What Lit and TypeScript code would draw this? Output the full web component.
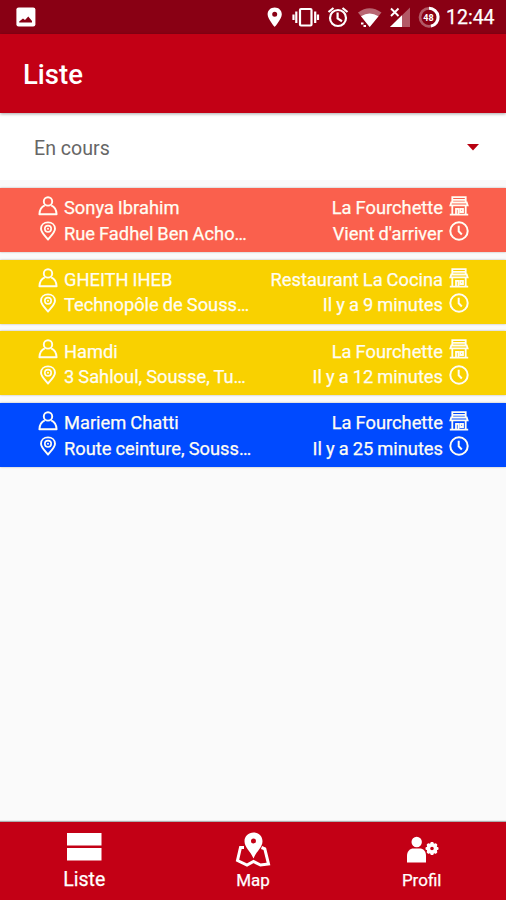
import { LitElement, html, svg, css } from "lit";
import { customElement, property } from "lit/decorators.js";

const person = html`<svg width="20" height="20" viewBox="0 0 20 20" fill="none" stroke="currentColor" stroke-width="1.900"><circle cx="10" cy="5.400" r="4.200"/><path d="M6.800 9.300C3.600 10.600 1.600 13.500 1.400 18.200H18.600C18.400 13.500 16.400 10.600 13.200 9.300" stroke-linejoin="round"/></svg>`;
const pin = html`<svg width="20" height="20" viewBox="0 0 20 20" fill="none" stroke="currentColor" stroke-width="1.900"><path d="M10 18.600C7.500 15.500 3 11.400 3 7.800C3 3.900 6.100 1.400 10 1.400S17 3.900 17 7.800C17 11.400 12.500 15.500 10 18.600Z" stroke-linejoin="round"/><circle cx="10" cy="7.800" r="3.200" stroke-width="1.600"/><circle cx="10" cy="7.800" r="1" fill="currentColor" stroke="none"/></svg>`;
const shop = html`<svg width="20" height="20" viewBox="0 0 20 20" fill="none" stroke="currentColor" stroke-width="1.800"><path d="M3.300 6V1.200H16.700V6M3 3.900H17M2.300 6.500H17.700L18.600 9.300H1.400ZM3.300 9.500V18.500M16.700 9.500V18.500M.8 18.700H19.200M7 18.500V12.800H9.500V18.500M11.500 12.800H14V16H11.500Z"/></svg>`;
const clock = html`<svg width="20" height="20" viewBox="0 0 20 20" fill="none" stroke="currentColor" stroke-width="2"><circle cx="10" cy="10" r="8.700"/><path d="M9.700 4.800V10.300L12.800 13.500"/></svg>`;

const listIcon = html`<svg width="36" height="30" viewBox="0 0 36 30" fill="currentColor"><rect x="1" y="1" width="34.500" height="12.500"/><rect x="1" y="16" width="34.500" height="12.500"/></svg>`;
const mapIcon = html`<svg width="36" height="36" viewBox="0 0 36 36"><path d="M9 15.500H5.500L2.500 28.500L12 33L18.500 29.500L25.500 33L33.500 32L29.800 16.800L26.500 15.500" fill="none" stroke="currentColor" stroke-width="3"/><path fill="currentColor" fill-rule="evenodd" d="M18.500 .5C13.500 .5 9.500 4 9.500 9.200C9.500 15.500 15.500 19 18.500 26.500C21.500 19 27.500 15.500 27.500 9.200C27.500 4 23.500 .5 18.500 .5ZM18.500 6.500A2.500 2.500 0 1 1 18.500 11.500A2.500 2.500 0 1 1 18.500 6.500Z"/></svg>`;
const profileIcon = html`<svg width="34" height="28" viewBox="0 0 34 28" fill="currentColor"><circle cx="11.700" cy="6" r="5.200"/><path d="M2 26.500V20C2 15 5 12.500 8.500 12.500H14.500C18.500 12.500 21 15 21 20V26.500Z"/><circle cx="27" cy="12.500" r="3.600" fill="none" stroke="currentColor" stroke-width="3.600"/>${[0, 45, 90, 135, 180, 225, 270, 315].map((a) => svg`<rect x="25.400" y="6" width="3.200" height="3" rx="1" transform="rotate(${a} 27 12.500)"/>`)}</svg>`;

interface Order {
  tone: string;
  name: string;
  address: string;
  place: string;
  time: string;
}

const orders: Order[] = [
  { tone: "coral", name: "Sonya Ibrahim", address: "Rue Fadhel Ben Acho…", place: "La Fourchette", time: "Vient d'arriver" },
  { tone: "yellow", name: "GHEITH IHEB", address: "Technopôle de Souss…", place: "Restaurant La Cocina", time: "Il y a 9 minutes" },
  { tone: "yellow", name: "Hamdi", address: "3 Sahloul, Sousse, Tu…", place: "La Fourchette", time: "Il y a 12 minutes" },
  { tone: "blue", name: "Mariem Chatti", address: "Route ceinture, Souss…", place: "La Fourchette", time: "Il y a 25 minutes" },
];

@customElement("status-bar")
export class StatusBar extends LitElement {
  static styles = css`
    :host { display: flex; height: 34px; flex: none; align-items: center; background: #890014; color: #fff; padding: 0 10px 0 16px; box-sizing: border-box; }
    svg { display: block; flex: none; }
    .spacer { flex: 1; }
    .icons { display: flex; align-items: center; }
    .time { font-size: 19.500px; line-height: 24px; width: 50px; margin-left: -3px; padding-top: 2px; white-space: nowrap; -webkit-text-stroke: .25px; }
    .level { font: 700 9px Roboto, sans-serif; }
  `;
  render() {
    return html`
      <svg width="20" height="20" viewBox="0 0 20 20"><rect x=".4" y=".4" width="19" height="19" rx="2.200" fill="#fff"/><path d="M3.200 15.500V14.500L7 11.500L9 13L12.300 9.500L16 14V15.500Z" fill="#890014"/></svg>
      <div class="spacer"></div>
      <div class="icons">
        <svg width="184" height="26" viewBox="0 0 184 26">
          <path fill="#fff" fill-rule="evenodd" d="M9.700 3.500C5.600 3.500 2.600 6.400 2.600 10.300C2.600 15 9.700 23 9.700 23S16.800 15 16.800 10.300C16.800 6.400 13.800 3.500 9.700 3.500ZM9.700 7.800A2.500 2.500 0 1 1 9.700 12.800A2.500 2.500 0 1 1 9.700 7.800Z"/>
          <g fill="none" stroke="#fff" stroke-width="2.200"><rect x="35" y="5" width="11.500" height="16.500" rx="1"/><path d="M31.300 7.500V19M28.500 10.500V16M50.200 7.500V19M53 10.500V16"/></g>
          <g fill="none" stroke="#fff" stroke-width="2.200"><circle cx="73" cy="14" r="8"/><path d="M72.600 8.500V14.500L77 17.200M63.500 8L68.500 4M82.500 8L77.500 4"/></g>
          <path d="M93 8.500Q104.500 0 116.500 8.500L104.700 23Z" fill="#fff" opacity=".4"/>
          <path d="M96 12.300Q104.500 6.500 113.500 12.300L104.700 23Z" fill="#fff"/><path d="M96 19.500H98.500M98.500 22H101" stroke="#fff" stroke-width="2"/>
          <path d="M145 3.500V23H125Z" fill="#fff" opacity=".35"/><path d="M137 11.300V23H125Z" fill="#fff"/><path d="M126 4.500L133.500 12M133.500 4.500L126 12" stroke="#fff" stroke-width="1.900"/>
          <circle cx="164" cy="13.300" r="9" fill="none" stroke="#fff" stroke-width="2.700" opacity=".35"/><path d="M164 4.300A9 9 0 0 1 166 22.100" fill="none" stroke="#fff" stroke-width="3"/>
          <text class="level" x="163.500" y="16.500" text-anchor="middle" fill="#fff">48</text>
        </svg>
      </div>
      <div class="time">12:44</div>`;
  }
}

@customElement("order-card")
export class OrderCard extends LitElement {
  @property({ attribute: false }) order!: Order;
  static styles = css`
    :host { display: block; }
    .card { height: 64px; box-sizing: border-box; display: flex; justify-content: space-between; padding: 7px 37px 0 38px; color: #fffdf3; font-size: 18.300px; line-height: 25.400px; word-spacing: -.5px; -webkit-text-stroke: .25px; box-shadow: 0 0 2px rgba(0,0,0,.28); }
    .coral { background: #fa604d; }
    .yellow { background: #f9d100; }
    .blue { background: #004aff; }
    .line { display: flex; gap: 6px; height: 25.400px; white-space: pre; }
    .right .line { justify-content: flex-end; }
    svg { display: block; flex: none; margin-top: 1px; -webkit-text-stroke: 0; }
    .text { padding-top: .3px; }
  `;
  render() {
    const o = this.order;
    return html`<div class="card ${o.tone}">
      <div><div class="line">${person}<span class="text">${o.name}</span></div><div class="line">${pin}<span class="text">${o.address}</span></div></div>
      <div class="right"><div class="line"><span class="text">${o.place}</span>${shop}</div><div class="line"><span class="text">${o.time}</span>${clock}</div></div>
    </div>`;
  }
}

@customElement("app-root")
export class AppRoot extends LitElement {
  static styles = css`
    :host { display: flex; flex-direction: column; height: 900px; background: #fafafa; font-family: Roboto, sans-serif; overflow: hidden; }
    svg { display: block; }
    header { height: 79px; flex: none; box-sizing: border-box; background: #c30015; color: #fff; padding: 25px 24px 0 23px; font-size: 27.500px; line-height: 32px; font-weight: 500; box-shadow: 0 1px 3px rgba(0,0,0,.35); z-index: 1; }
    .select { height: 67px; flex: none; box-sizing: border-box; background: #fff; display: flex; align-items: center; justify-content: space-between; padding: 3px 27px 0 34px; color: #666; font-size: 19.600px; }
    .select svg { margin-top: -2px; }
    .list { flex: 1; display: flex; flex-direction: column; gap: 7.700px; padding-top: 8px; }
    nav { height: 78px; flex: none; display: grid; grid-template-columns: repeat(3, 1fr); background: #c30015; color: #fff; box-shadow: 0 -1px 1px rgba(0,0,0,.3); }
    .tab { display: flex; flex-direction: column; align-items: center; font-size: 17px; line-height: 20px; -webkit-text-stroke: .25px; }
    .icon { height: 48px; box-sizing: border-box; display: flex; align-items: flex-start; padding-top: 10px; }
    .profile { padding-top: 14px; }
    .active { font-size: 19.500px; }
  `;
  render() {
    return html`
      <status-bar></status-bar>
      <header>Liste</header>
      <div class="select"><span>En cours</span><svg width="12" height="7" viewBox="0 0 12 7"><path d="M0 0H12L6 6.500Z" fill="#b80010"/></svg></div>
      <div class="list">${orders.map((o) => html`<order-card .order=${o}></order-card>`)}</div>
      <nav>
        <div class="tab active"><div class="icon">${listIcon}</div>Liste</div>
        <div class="tab"><div class="icon">${mapIcon}</div>Map</div>
        <div class="tab"><div class="icon profile">${profileIcon}</div>Profil</div>
      </nav>`;
  }
}
